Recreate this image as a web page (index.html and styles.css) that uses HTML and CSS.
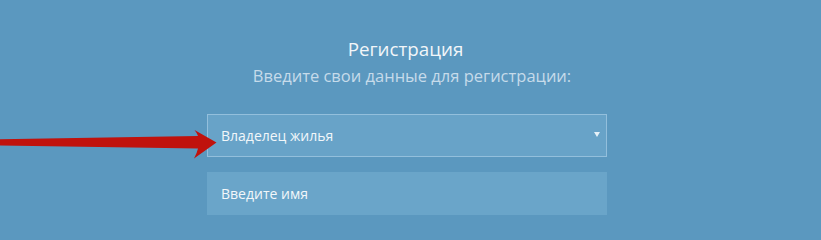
FILE: index.html
```html
<!DOCTYPE html>
<html lang="ru">
<head>
<meta charset="utf-8">
<link rel="stylesheet" href="styles.css">
</head>
<body>
<div class="page">
  <form class="form">
    <h1 class="title">Регистрация</h1>
    <p class="subtitle">Введите свои данные для регистрации:</p>
    <div class="select">
      <span class="select-text">Владелец жилья</span>
      <span class="caret"></span>
    </div>
    <div class="input">Введите имя</div>
  </form>
  <svg class="arrow" width="230" height="40" viewBox="0 125 230 40">
    <path d="M0,139.3 L198,136 Q197,133 194.5,130 L216.5,142.5 L194,158.5 Q197,153 198,148.5 L0,145.6 Z" fill="#c0120d"/>
  </svg>
</div>
</body>
</html>
```
FILE: styles.css
```css
html, body {
  margin: 0;
  padding: 0;
}
body {
  background: #5b98bf;
  font-family: "Open Sans", "Noto Sans", sans-serif;
  height: 224px;
  overflow: hidden;
}
.page {
  position: relative;
  padding-top: 37px;
  padding-right: 7px;
}
.form {
  width: 400px;
  margin: 0 auto;
  display: flex;
  flex-direction: column;
}
.title {
  margin: 0;
  font-size: 18.8px;
  line-height: 24px;
  font-weight: 400;
  color: #f2f6f9;
  text-align: center;
  margin-left: -3px;
}
.subtitle {
  margin: 4px 0 0;
  font-size: 16.5px;
  line-height: 22px;
  color: #c6dbea;
  text-align: center;
  margin-left: 10px;
}
.select {
  margin-top: 27px;
  height: 41px;
  border: 1px solid #93bfdc;
  background: #68a3c8;
  display: flex;
  align-items: center;
  justify-content: space-between;
  padding: 0 6px 0 13px;
}
.select-text,
.input {
  font-size: 14px;
  color: #f2f7fa;
  font-weight: 500;
}
.caret {
  width: 0;
  height: 0;
  border-left: 3px solid transparent;
  border-right: 3px solid transparent;
  border-top: 5px solid #e6f1f8;
  margin-top: -2px;
}
.input {
  margin-top: 15px;
  height: 43px;
  background: #6aa5c9;
  display: flex;
  align-items: center;
  padding-left: 14px;
}
.arrow {
  position: absolute;
  left: 0;
  top: 125px;
}
```
